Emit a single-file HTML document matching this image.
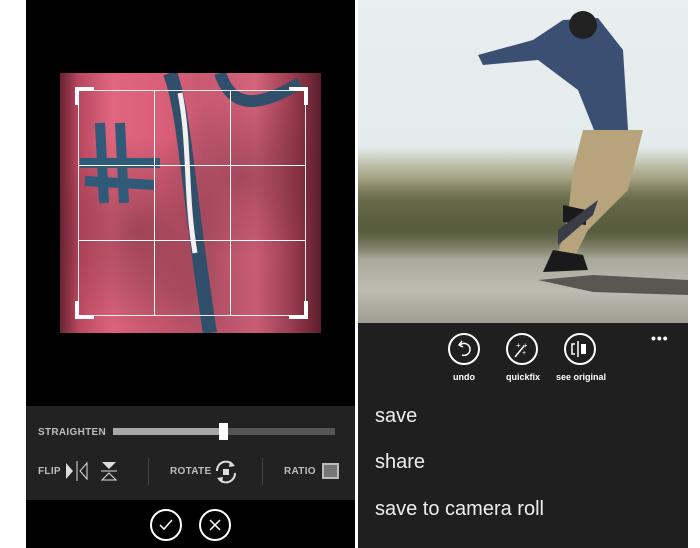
<!DOCTYPE html>
<html><head><meta charset="utf-8"><style>
*{margin:0;padding:0;box-sizing:border-box}
body{width:700px;height:548px;background:#fff;position:relative;overflow:hidden;font-family:"Liberation Sans",sans-serif}
.a{position:absolute}
.lbl{color:#bdbdbd;font-size:10px;font-weight:bold;letter-spacing:.3px}
</style></head><body>
<div class="a" style="left:26px;top:0;width:329px;height:548px;background:#000"></div>
<div class="a" style="left:60px;top:73px;width:261px;height:260px;background:linear-gradient(90deg,#6a2233 0%,#b8475f 7%,#e0667f 20%,#d95f78 40%,#c85a72 55%,#d4627b 75%,#8a3344 92%,#5a1f2c 100%);overflow:hidden">
 <div class="a" style="left:0;top:0;width:261px;height:260px;background:radial-gradient(circle at 30% 60%,rgba(60,20,30,.35),transparent 40%),radial-gradient(circle at 70% 40%,rgba(60,20,30,.3),transparent 35%),radial-gradient(circle at 50% 85%,rgba(90,40,50,.3),transparent 40%)"></div>
 <svg class="a" style="left:0;top:0" width="261" height="260">
  <path d="M110 0 C125 40 128 120 150 260" stroke="#2f4f6a" stroke-width="14" fill="none"/>
  <path d="M120 20 C130 70 125 120 135 180" stroke="#f4f0f0" stroke-width="5" fill="none"/>
  <path d="M160 0 C170 30 190 40 240 10" stroke="#2f4f6a" stroke-width="12" fill="none"/>
  <path d="M40 50 L44 130 M60 50 L64 130 M20 90 L100 90 M25 108 L95 112" stroke="#2f5a78" stroke-width="10" fill="none"/>
 </svg>
</div>
<div class="a" style="left:78px;top:90px;width:228px;height:226px;border:1px solid rgba(255,255,255,.9)"></div>
<div class="a" style="left:154px;top:90px;width:1px;height:226px;background:#fff"></div>
<div class="a" style="left:230px;top:90px;width:1px;height:226px;background:#fff"></div>
<div class="a" style="left:78px;top:165px;width:228px;height:1px;background:#fff"></div>
<div class="a" style="left:78px;top:240px;width:228px;height:1px;background:#fff"></div>
<div class="a" style="left:75px;top:87px;width:19px;height:18px;border-left:4px solid #fff;border-top:4px solid #fff"></div>
<div class="a" style="left:289px;top:87px;width:19px;height:18px;border-right:4px solid #fff;border-top:4px solid #fff"></div>
<div class="a" style="left:75px;top:301px;width:19px;height:18px;border-left:4px solid #fff;border-bottom:4px solid #fff"></div>
<div class="a" style="left:289px;top:301px;width:19px;height:18px;border-right:4px solid #fff;border-bottom:4px solid #fff"></div>
<div class="a" style="left:26px;top:406px;width:329px;height:94px;background:#222"></div>
<div class="a lbl" style="left:38px;top:427px">STRAIGHTEN</div>
<div class="a" style="left:113px;top:428px;width:222px;height:7px;background:#555"></div>
<div class="a" style="left:113px;top:428px;width:110px;height:7px;background:#a8a8a8"></div>
<div class="a" style="left:219px;top:423px;width:9px;height:17px;background:#fff"></div>
<div class="a lbl" style="left:38px;top:466px">FLIP</div>
<svg class="a" style="left:64px;top:460px" width="60" height="24">
 <path d="M2 3 L9 11 L2 19Z" fill="#ddd"/><line x1="13" y1="1" x2="13" y2="21" stroke="#ddd"/><path d="M23 3 L16 11 L23 19Z" fill="none" stroke="#ddd"/>
 <path d="M38 2 L52 2 L45 9Z" fill="#ddd"/><line x1="37" y1="11" x2="53" y2="11" stroke="#ddd"/><path d="M38 20 L52 20 L45 13Z" fill="none" stroke="#ddd"/>
</svg>
<div class="a" style="left:148px;top:458px;width:1px;height:27px;background:#444"></div>
<div class="a lbl" style="left:170px;top:466px">ROTATE</div>
<svg class="a" style="left:212px;top:458px" width="28" height="28">
 <path d="M5 13 A9 9 0 0 1 21 7" stroke="#ddd" stroke-width="2" fill="none"/><path d="M18 3 L23 8 L17 9Z" fill="#ddd"/>
 <path d="M23 15 A9 9 0 0 1 7 21" stroke="#ddd" stroke-width="2" fill="none"/><path d="M10 25 L5 20 L11 19Z" fill="#ddd"/>
 <rect x="11" y="11" width="6" height="6" fill="#ddd"/>
</svg>
<div class="a" style="left:262px;top:458px;width:1px;height:27px;background:#444"></div>
<div class="a lbl" style="left:284px;top:466px">RATIO</div>
<div class="a" style="left:322px;top:463px;width:17px;height:16px;background:#777;border:2px solid #bbb"></div>
<div class="a" style="left:150px;top:509px;width:32px;height:32px;border:2px solid #fff;border-radius:50%"></div>
<svg class="a" style="left:150px;top:509px" width="32" height="32"><path d="M10 16 L14 20 L22 11" stroke="#fff" stroke-width="1.5" fill="none"/></svg>
<div class="a" style="left:199px;top:509px;width:32px;height:32px;border:2px solid #fff;border-radius:50%"></div>
<svg class="a" style="left:199px;top:509px" width="32" height="32"><path d="M11 11 L21 21 M21 11 L11 21" stroke="#fff" stroke-width="1.5"/></svg>
<div class="a" style="left:358px;top:0;width:330px;height:323px;background:linear-gradient(180deg,#e9eef0 0%,#e4ebec 45%,#c8c4a8 55%,#7d7a5a 62%,#6d6d4d 72%,#a8a89a 80%,#bcbcb2 90%,#a09c90 100%);overflow:hidden">
 <div class="a" style="left:0;top:150px;width:330px;height:110px;background:linear-gradient(180deg,transparent,rgba(90,95,60,.5) 40%,rgba(70,80,50,.6) 70%,transparent)"></div>
 <svg class="a" style="left:0;top:0" width="330" height="323">
  <path d="M205 20 L240 18 L265 50 L270 130 L240 140 L220 90 L180 60 L125 65 L120 55 L175 40Z" fill="#3b4f72"/>
  <circle cx="225" cy="25" r="14" fill="#222"/>
  <path d="M225 130 L285 130 L270 190 L230 230 L215 260 L198 262 L210 215 L215 170Z" fill="#b8a47c"/>
  <path d="M195 250 L225 255 L230 270 L185 272Z M205 205 L228 210 L228 225 L205 222Z" fill="#1a1a1a"/>
  <path d="M180 280 L235 275 L330 280 L330 295 L235 292Z" fill="#5a5652"/>
  <path d="M200 230 L240 200 L235 215 L200 245Z" fill="#3a3d48"/>
 </svg>
</div>
<div class="a" style="left:358px;top:323px;width:330px;height:225px;background:#1f1f1f"></div>
<div class="a" style="left:651px;top:330px;color:#fff;font-size:14px;font-weight:bold;letter-spacing:1px">•••</div>
<div class="a" style="left:448px;top:333px;width:32px;height:32px;border:2px solid #fff;border-radius:50%"></div>
<svg class="a" style="left:448px;top:333px" width="32" height="32"><path d="M12 12 A6 6 0 1 1 14 22" stroke="#fff" stroke-width="1.5" fill="none"/><path d="M14 8 L11 12 L15 14" stroke="#fff" stroke-width="1.5" fill="none"/></svg>
<div class="a" style="left:506px;top:333px;width:32px;height:32px;border:2px solid #fff;border-radius:50%"></div>
<svg class="a" style="left:506px;top:333px" width="32" height="32"><path d="M9 24 L18 13" stroke="#fff" stroke-width="1.5"/><text x="10" y="15" fill="#fff" font-size="8">+ +</text><text x="16" y="22" fill="#fff" font-size="7">+</text></svg>
<div class="a" style="left:564px;top:333px;width:32px;height:32px;border:2px solid #fff;border-radius:50%"></div>
<svg class="a" style="left:564px;top:333px" width="32" height="32"><path d="M11 11 L8 11 L8 21 L11 21" stroke="#fff" stroke-width="1.5" fill="none"/><line x1="14" y1="8" x2="14" y2="24" stroke="#fff" stroke-width="1.5"/><rect x="17" y="11" width="5" height="10" fill="#fff"/></svg>
<div class="a" style="left:453px;top:372px;color:#fff;font-size:9px;font-weight:bold">undo</div>
<div class="a" style="left:506px;top:372px;color:#fff;font-size:9px;font-weight:bold">quickfix</div>
<div class="a" style="left:556px;top:372px;color:#fff;font-size:9px;font-weight:bold">see original</div>
<div class="a" style="left:375px;top:405px;color:#eee;font-size:20px">save</div>
<div class="a" style="left:375px;top:451px;color:#eee;font-size:20px">share</div>
<div class="a" style="left:375px;top:498px;color:#eee;font-size:20px">save to camera roll</div>
</body></html>
